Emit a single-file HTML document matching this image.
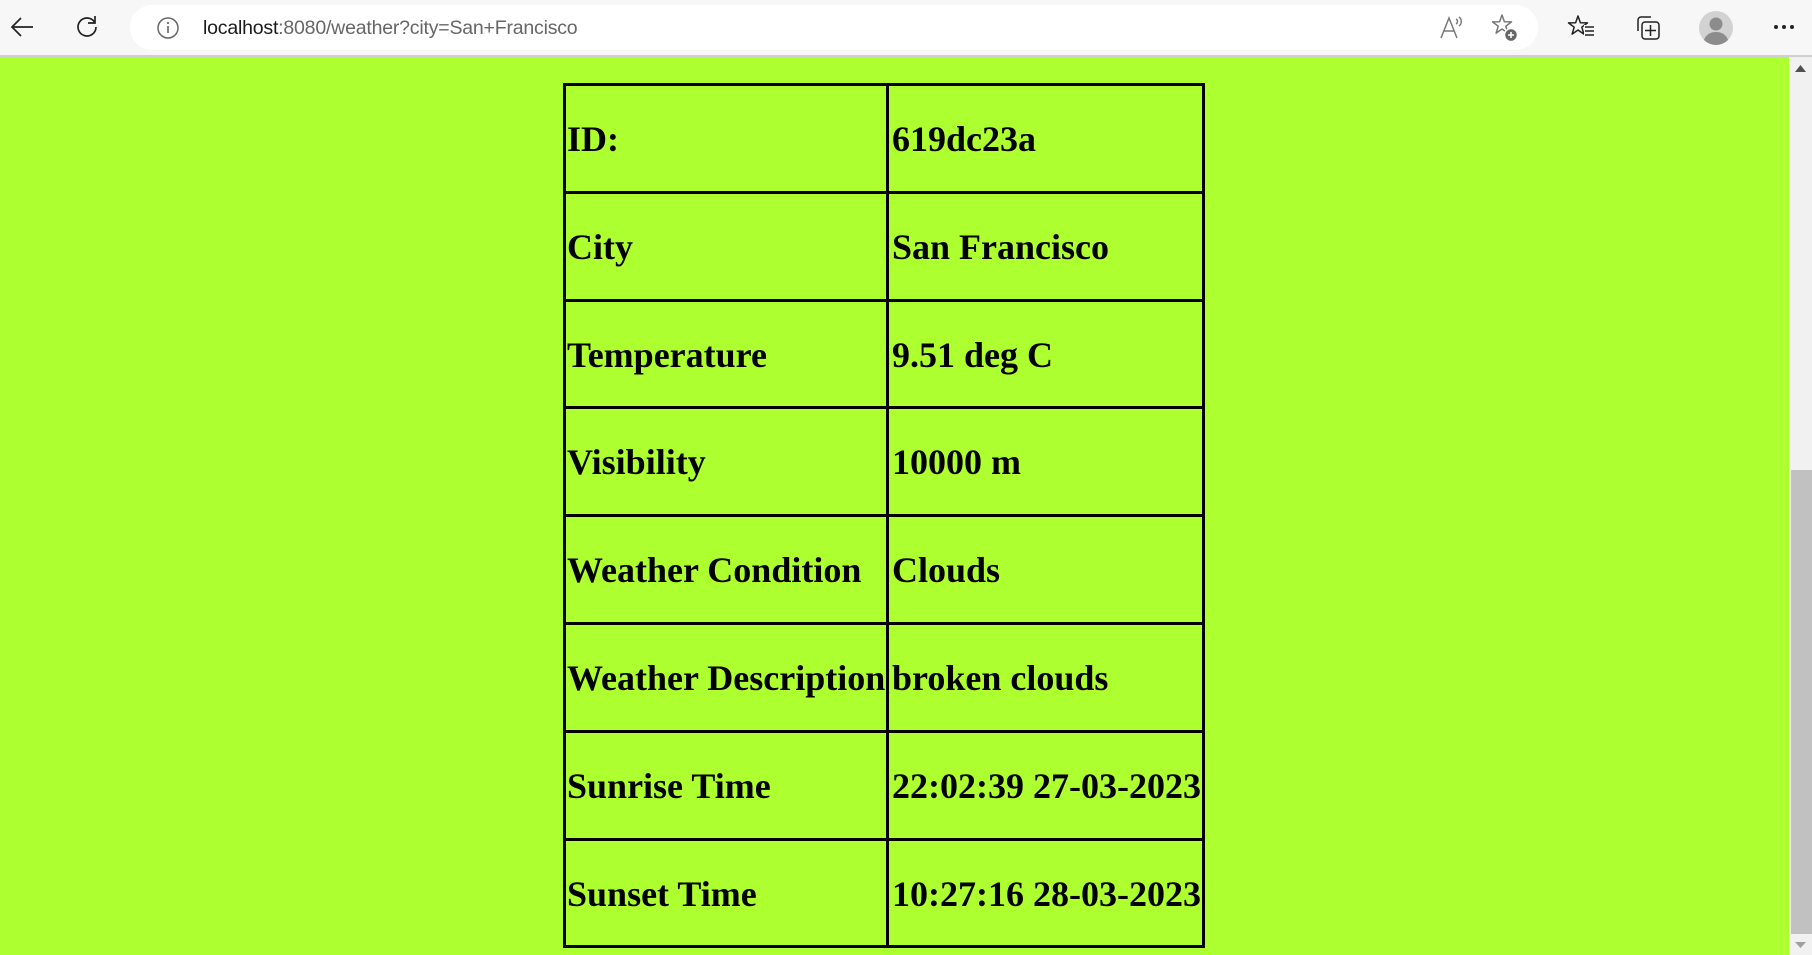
<!DOCTYPE html>
<html><head><meta charset="utf-8"><style>
*{margin:0;padding:0;box-sizing:border-box}
body{width:1812px;height:955px;overflow:hidden;background:#adff2f;position:relative;font-family:"Liberation Serif",serif}
#bar{position:absolute;left:0;top:0;width:1812px;height:57px;background:#f7f7f7;border-bottom:2px solid #cfcfcf}
#pill{position:absolute;left:130px;top:5px;width:1408px;height:45px;background:#fff;border-radius:23px}
#url{position:absolute;left:203px;top:17px;font-family:"Liberation Sans",sans-serif;font-size:19.5px;color:#666;letter-spacing:-0.2px}
#url b{font-weight:normal;color:#1a1a1a}
svg.i{position:absolute}
#sb{position:absolute;left:1789px;top:57px;width:23px;height:898px;background:#f1f1f1}
#thumb{position:absolute;left:1791px;top:470px;width:21px;height:464px;background:#c1c1c1}
.h{position:absolute;background:#000;height:3px;left:563px;width:642px}
.v{position:absolute;background:#000;width:3px;top:83px;height:864px}
.t{position:absolute;font-weight:bold;font-size:36px;line-height:40px;color:#000;white-space:nowrap}
</style></head><body>
<div id="bar">
<svg class="i" style="left:9px;top:14px" width="26" height="26" viewBox="0 0 26 26"><path d="M24 13H3M12 4L3 13l9 9" fill="none" stroke="#222" stroke-width="1.7"/></svg>
<svg class="i" style="left:74px;top:14px" width="26" height="26" viewBox="0 0 26 26"><path d="M20.5 8A9 9 0 1 0 22 13" fill="none" stroke="#222" stroke-width="1.7"/><path d="M21 2v7h-7" fill="none" stroke="#222" stroke-width="1.7"/></svg>
<div id="pill"></div>
<svg class="i" style="left:156px;top:16px" width="24" height="24" viewBox="0 0 24 24"><circle cx="12" cy="12" r="10" fill="none" stroke="#666" stroke-width="1.5"/><path d="M12 10v7" stroke="#666" stroke-width="1.6"/><circle cx="12" cy="7" r="1.1" fill="#666"/></svg>
<div id="url"><b>localhost</b>:8080/weather?city=San+Francisco</div>
<svg class="i" style="left:1438px;top:14px" width="28" height="28" viewBox="0 0 28 28"><path d="M3 24L11 4l8 20M6 17h10" fill="none" stroke="#777" stroke-width="1.5"/><path d="M18 5c2 1 2 4 0 5M21 3c3 2 3 7 0 9" fill="none" stroke="#777" stroke-width="1.4"/></svg>
<svg class="i" style="left:1490px;top:13px" width="30" height="30" viewBox="0 0 30 30"><path d="M12 2L14.4 8.8 21.5 8.9 15.8 13.2 17.9 20.1 12 16 6.1 20.1 8.2 13.2 2.5 8.9 9.6 8.8Z" fill="none" stroke="#777" stroke-width="1.5" stroke-linejoin="round"/><circle cx="21" cy="22" r="6.5" fill="#666" stroke="#fff" stroke-width="1.5"/><path d="M21 19v6M18 22h6" stroke="#fff" stroke-width="1.6"/></svg>
<svg class="i" style="left:1567px;top:13px" width="30" height="30" viewBox="0 0 30 30"><path d="M11 3L13.4 9.8 20.5 9.9 14.8 14.2 16.9 21.1 11 17 5.1 21.1 7.2 14.2 1.5 9.9 8.6 9.8Z" fill="#f7f7f7" stroke="#222" stroke-width="1.5" stroke-linejoin="round"/><rect x="17" y="12" width="10" height="12" fill="#f7f7f7"/><path d="M18 14h9M18 18h9M18 22h9" stroke="#222" stroke-width="1.5"/></svg>
<svg class="i" style="left:1633px;top:13px" width="30" height="30" viewBox="0 0 30 30"><path d="M5 18V7a3 3 0 0 1 3-3h10" fill="none" stroke="#222" stroke-width="1.5"/><rect x="9" y="9" width="17" height="17" rx="3" fill="none" stroke="#222" stroke-width="1.5"/><path d="M17.5 12v11M12 17.5h11" stroke="#222" stroke-width="1.5"/></svg>
<svg class="i" style="left:1699px;top:11px" width="34" height="34" viewBox="0 0 34 34"><circle cx="17" cy="17" r="17" fill="#d2d2d2"/><circle cx="17" cy="13" r="6.5" fill="#8c8c8c"/><path d="M5 29c2-6 7-8 12-8s10 2 12 8a17 17 0 0 1-24 0z" fill="#8c8c8c"/></svg>
<svg class="i" style="left:1772px;top:22px" width="24" height="10" viewBox="0 0 24 10"><circle cx="4" cy="5" r="2" fill="#222"/><circle cx="12" cy="5" r="2" fill="#222"/><circle cx="20" cy="5" r="2" fill="#222"/></svg>
</div>
<div id="sb"></div><div id="thumb"></div>
<svg class="i" style="left:1794px;top:64px" width="13" height="10"><path d="M1 8h11L6.5 1z" fill="#505050"/></svg>
<svg class="i" style="left:1794px;top:940px" width="13" height="10"><path d="M1 2h11L6.5 8z" fill="#a0a0a0"/></svg>

<div class="v" style="left:563px"></div>
<div class="v" style="left:886px"></div>
<div class="v" style="left:1202px"></div>
<div class="h" style="top:83px"></div>
<div class="h" style="top:191px"></div>
<div class="h" style="top:299px"></div>
<div class="h" style="top:406px"></div>
<div class="h" style="top:514px"></div>
<div class="h" style="top:622px"></div>
<div class="h" style="top:730px"></div>
<div class="h" style="top:838px"></div>
<div class="h" style="top:945px"></div>

<div class="t" style="left:567px;top:119px">ID:</div><div class="t" style="left:892px;top:119px">619dc23a</div>
<div class="t" style="left:567px;top:227px">City</div><div class="t" style="left:892px;top:227px">San Francisco</div>
<div class="t" style="left:567px;top:335px">Temperature</div><div class="t" style="left:892px;top:335px">9.51 deg C</div>
<div class="t" style="left:567px;top:442px">Visibility</div><div class="t" style="left:892px;top:442px">10000 m</div>
<div class="t" style="left:567px;top:550px">Weather Condition</div><div class="t" style="left:892px;top:550px">Clouds</div>
<div class="t" style="left:567px;top:658px">Weather Description</div><div class="t" style="left:892px;top:658px">broken clouds</div>
<div class="t" style="left:567px;top:766px">Sunrise Time</div><div class="t" style="left:892px;top:766px">22:02:39 27-03-2023</div>
<div class="t" style="left:567px;top:874px">Sunset Time</div><div class="t" style="left:892px;top:874px">10:27:16 28-03-2023</div>
</body></html>
